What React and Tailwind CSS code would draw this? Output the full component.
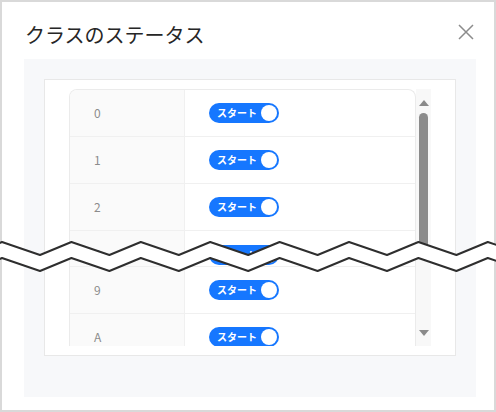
import React from "react";

const FONT = { fontFamily: '"Noto Sans CJK JP", "Noto Sans", sans-serif' };

function Toggle() {
  return (
    <div className="flex h-[20px] w-[70px] items-center justify-between rounded-full bg-[#1677ff] pl-[8px] pr-[2px]">
      <span className="text-[10px] font-bold leading-none text-white">スタート</span>
      <span className="h-[16px] w-[16px] rounded-full bg-white" />
    </div>
  );
}

function Row({ label, short }) {
  return (
    <div
      className={
        "flex border-b border-[#f0f0f0] " +
        (short ? "h-[36px] items-start" : "h-[47px] items-center")
      }
    >
      <div
        className={
          "flex h-full w-[115px] shrink-0 border-r border-[#f0f0f0] bg-[#fafafa] pl-[24px] text-[12px] text-[#8c8c8c] " +
          (short ? "items-start pt-[14px]" : "items-center")
        }
      >
        {label}
      </div>
      <div className={"flex h-full flex-1 pl-[24px] " + (short ? "items-start pt-[14px]" : "items-center")}>
        <Toggle />
      </div>
    </div>
  );
}

function Wave() {
  const P = 69.4;
  const p0 = 2;
  const down = 38;
  const top = [];
  for (let k = -2; k <= 9; k++) {
    const p = p0 + P * k;
    top.push([p, 242]);
    top.push([p + down, 255]);
  }
  const bottom = top.map(([x, y]) => [x, y + 16]);
  const toStr = (pts) => pts.map(([x, y]) => `${x.toFixed(1)},${y}`).join(" ");
  const poly = toStr([...top, ...bottom.slice().reverse()]);
  return (
    <svg className="pointer-events-none absolute left-0 top-0" width="496" height="412" viewBox="0 0 496 412">
      <polygon points={poly} fill="#ffffff" />
      <polyline points={toStr(top)} fill="none" stroke="#2e2e2e" strokeWidth="2" strokeLinejoin="round" />
      <polyline points={toStr(bottom)} fill="none" stroke="#2e2e2e" strokeWidth="2" strokeLinejoin="round" />
    </svg>
  );
}

export default function App() {
  const rows = [
    { label: "0" },
    { label: "1" },
    { label: "2" },
    { label: "3", short: true },
    { label: "9" },
    { label: "A" },
  ];
  return (
    <div className="relative h-[412px] w-[496px] overflow-hidden" style={FONT}>
      <div className="flex h-full w-full flex-col border-2 border-[#d9d9d9] bg-white">
        <div className="flex h-[57px] shrink-0 items-start justify-between pl-[23px] pr-[20px] pt-[19px]">
          <span className="text-[20px] leading-[28px] text-[#262626]">クラスのステータス</span>
          <svg className="mt-[3px]" width="16" height="16" viewBox="0 0 16 16">
            <path d="M1 1 L15 15 M15 1 L1 15" stroke="#8c8c8c" strokeWidth="1.5" fill="none" />
          </svg>
        </div>
        <div className="ml-[22px] w-[452px] bg-[#f7f8fa] px-[20px] pb-[41px] pt-[20px]">
          <div className="flex h-[277px] flex-col border border-[#e8e8e8] bg-white pl-[24px] pt-[9px]">
            <div className="flex h-[257px] w-[362px] overflow-hidden">
              <div className="w-[347px] shrink-0 overflow-hidden rounded-t-[8px] border border-b-0 border-[#ebebeb]">
                {rows.map((r) => (
                  <Row key={r.label} label={r.label} short={r.short} />
                ))}
              </div>
              <div className="relative flex w-[15px] shrink-0 flex-col items-center bg-[#f8f8f8]">
                <svg className="mt-[11px]" width="10" height="6" viewBox="0 0 10 6">
                  <path d="M0 6 L5 0 L10 6 Z" fill="#8a8a8a" />
                </svg>
                <div className="mt-[7px] h-[144px] w-[9px] rounded-t-[5px] rounded-b-[5px] bg-[#8c8c8c]" />
                <div className="flex-1" />
                <svg className="mb-[10px]" width="10" height="6" viewBox="0 0 10 6">
                  <path d="M0 0 L10 0 L5 6 Z" fill="#8a8a8a" />
                </svg>
              </div>
            </div>
          </div>
        </div>
      </div>
      <Wave />
    </div>
  );
}
